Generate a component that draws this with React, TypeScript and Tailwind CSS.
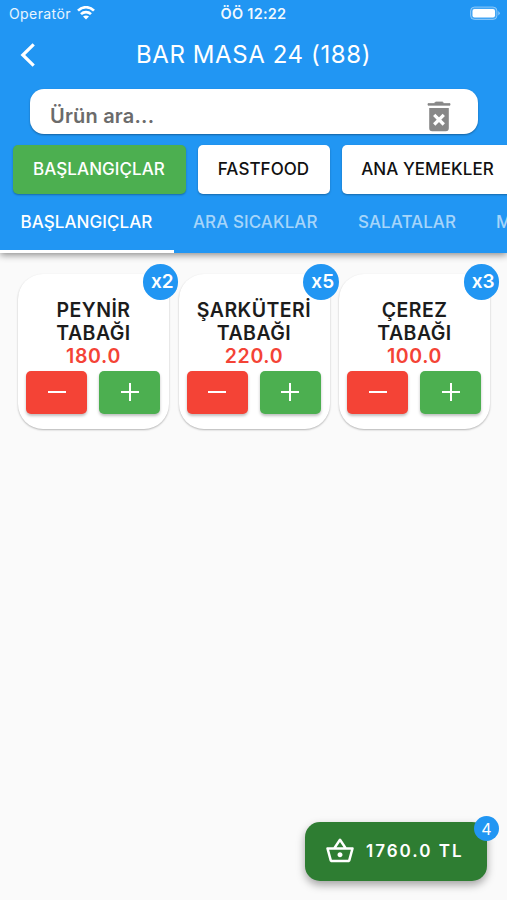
import { MdOutlineShoppingBasket } from "react-icons/md";

const categories = [
  { name: "BAŞLANGIÇLAR", style: "w-[173px] bg-[#4caf50] text-white" },
  { name: "FASTFOOD", style: "w-[132px] bg-white text-[#111]" },
  { name: "ANA YEMEKLER", style: "w-[172px] bg-white text-[#111]" },
];

const products = [
  { first: "PEYNİR", price: "180.0", count: "x2" },
  { first: "ŞARKÜTERİ", price: "220.0", count: "x5" },
  { first: "ÇEREZ", price: "100.0", count: "x3" },
];

function StatusBar() {
  return (
    <div className="grid h-[27px] grid-cols-[1fr_auto_1fr] items-center pr-[7px] pl-[9px] text-[14px]">
      <div className="flex items-center gap-[6px] text-white/90">
        <span className="text-[14px] tracking-[0.4px]">Operatör</span>
        <svg className="mb-px" width="18" height="14" viewBox="0 0 18 14" fill="none" stroke="white" strokeWidth="2.7">
          <path d="M1 4.6C5.6 .1 12.4 .1 17 4.6" />
          <path d="M4 8.1c2.8-2.7 7.2-2.7 10 0" />
          <path d="M9 13.4 6 10.5c1.7-1.5 4.3-1.5 6 0Z" fill="white" stroke="none" />
        </svg>
      </div>
      <span className="mr-[2px] text-center text-[14.5px] font-semibold tracking-[0.25px] text-white/95">ÖÖ 12:22</span>
      <svg className="justify-self-end" width="31" height="15" viewBox="0 0 31 15">
        <rect x="1.5" y="1" width="26.5" height="12.5" rx="4" fill="white" fillOpacity=".15" stroke="white" strokeOpacity=".4" />
        <rect x="3.5" y="3" width="22.5" height="8.5" rx="2" fill="white" />
        <path d="M29.3 5v4.5q3-2.2 0-4.5Z" fill="white" fillOpacity=".5" />
      </svg>
    </div>
  );
}

function TrashIcon() {
  return (
    <svg className="mt-[9px] mr-[7px]" width="24" height="31" viewBox="0 0 24 31">
      <path d="M1 4.2V2.6h6L8.6 1h6.8L17 2.6h6v1.6Z" fill="#888" stroke="#888" strokeWidth=".8" />
      <path d="M2.2 7h19.6v20.3a3 3 0 0 1-3 3H5.2a3 3 0 0 1-3-3Z" fill="#888" />
      <path d="m7.2 13.9 9.6 9.6m0-9.6-9.6 9.6" stroke="white" strokeWidth="3.2" />
    </svg>
  );
}

function Header() {
  return (
    <header className="flex h-[252.5px] flex-col overflow-hidden bg-[#2196f3]">
      <StatusBar />
      <div className="grid h-[62px] grid-cols-[60px_1fr_60px] items-center pb-[6px]">
        <svg className="ml-[20px]" width="16" height="26" viewBox="0 0 16 26" fill="none" stroke="white" strokeWidth="3.2">
          <path d="M13.7 2.3 2.8 13l10.9 10.7" />
        </svg>
        <h1 className="pb-px text-center text-[24px] tracking-[0.6px] whitespace-nowrap text-white">BAR MASA 24 (188)</h1>
      </div>
      <div className="mr-[29.5px] ml-[30px] flex h-[45px] shrink-0 items-center justify-between rounded-[14px] bg-white pr-[20px] pl-[20px] shadow-[0_1px_2px_rgba(0,0,0,0.35)]">
        <span className="mt-[9px] text-[20px] font-semibold tracking-[0.2px] text-[#6b6b6b]">Ürün ara...</span>
        <TrashIcon />
      </div>
      <div className="mt-[11px] ml-[13px] flex h-[49px] shrink-0 gap-[12px]">
        {categories.map((c) => (
          <button
            key={c.name}
            className={`shrink-0 rounded-[5px] pr-px text-[17px] font-medium tracking-[0.06px] whitespace-nowrap shadow-[0_1px_2px_rgba(0,0,0,0.3)] ${c.style}`}
          >
            {c.name}
          </button>
        ))}
      </div>
      <nav className="flex h-[58.5px] shrink-0 text-[17px] font-medium tracking-[0.06px] whitespace-nowrap text-[#a6d5fa]">
        <div className="w-[173.5px] shrink-0 border-b-[3px] border-white pt-[16px] pl-[20.5px] text-white">BAŞLANGIÇLAR</div>
        <div className="w-[164.5px] shrink-0 pt-[16px] pl-[19.5px]">ARA SICAKLAR</div>
        <div className="w-[138px] shrink-0 pt-[16px] pl-[20px]">SALATALAR</div>
        <div className="shrink-0 pt-[16px] pl-[20px]">M</div>
      </nav>
    </header>
  );
}

function Product({ first, price, count }: { first: string; price: string; count: string }) {
  return (
    <article className="relative flex h-[155px] w-[151px] flex-col items-center rounded-[25px] bg-white pt-[25px] shadow-[0_1px_2px_rgba(0,0,0,0.28)]">
      <h2 className="text-center text-[19.5px] leading-[23px] font-semibold tracking-[0.45px] text-[#1c1c1c]">
        {first}
        <br />
        TABAĞI
      </h2>
      <p className="text-[19.5px] leading-[23px] font-semibold tracking-[0.65px] text-[#f44336]">{price}</p>
      <div className="mt-[2.5px] mr-px flex gap-[12px]">
        <button className="flex h-[43.5px] w-[61px] items-center justify-center rounded-[5px] bg-[#f44336] shadow-[0_2px_3px_rgba(0,0,0,0.25)]">
          <svg width="18" height="18" stroke="white" strokeWidth="2"><path d="M0 9h18" /></svg>
        </button>
        <button className="flex h-[43.5px] w-[61px] items-center justify-center rounded-[5px] bg-[#4caf50] shadow-[0_2px_3px_rgba(0,0,0,0.25)]">
          <svg width="18" height="18" stroke="white" strokeWidth="2"><path d="M0 9h18M9 0v18" /></svg>
        </button>
      </div>
      <span className="absolute -top-[10px] -right-[9px] z-10 flex size-[35.5px] items-center justify-center rounded-full bg-[#2196f3] pt-px pl-[4px] text-[19px] font-semibold text-white">
        {count}
      </span>
    </article>
  );
}

export default function App() {
  return (
    <div className="flex h-[900px] w-[507px] flex-col overflow-hidden bg-[#fafafa] font-['Inter','Liberation_Sans',sans-serif]">
      <div className="relative z-10 shadow-[0_2px_7px_rgba(0,0,0,0.45)]">
        <Header />
      </div>
      <main className="flex flex-1 gap-[9.5px] pt-[21.5px] pl-[18px]">
        {products.map((p) => (
          <Product key={p.first} {...p} />
        ))}
      </main>
      <div className="mr-[20px] mb-[19.5px] flex justify-end">
        <button className="relative flex h-[58.5px] w-[182px] items-center rounded-[15px] bg-[#2e7d32] pl-[20px] text-white shadow-[0_4px_9px_rgba(0,0,0,0.35)]">
          <MdOutlineShoppingBasket className="size-[30px]" />
          <span className="ml-[11px] text-[17px] font-semibold tracking-[2px] whitespace-nowrap">1760.0 TL</span>
          <span className="absolute -top-[6px] -right-[12px] flex size-[25px] items-center justify-center rounded-full bg-[#2196f3] text-[16px]">4</span>
        </button>
      </div>
    </div>
  );
}
